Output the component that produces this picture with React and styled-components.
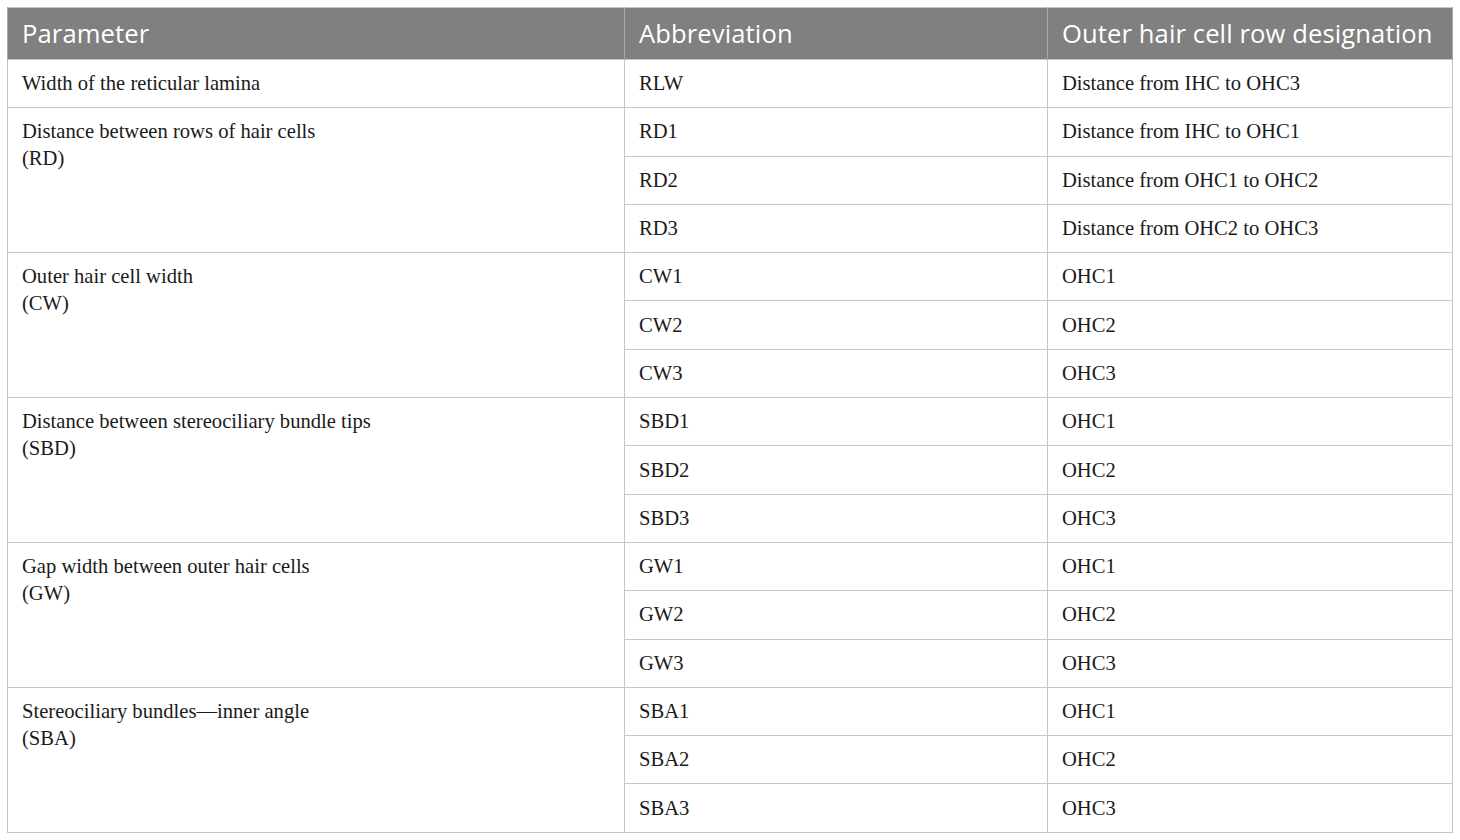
import React from "react";
import styled, { createGlobalStyle } from "styled-components";

const Global = createGlobalStyle`
  html, body { margin: 0; padding: 0; background: #ffffff; }
  body { font-family: "Liberation Serif", serif; }
`;

const Page = styled.div`
  padding: 7px 7px 0 7px;
  width: 1445px;
`;

const Table = styled.table`
  border-collapse: collapse;
  width: 1445px;
  table-layout: fixed;
  border: 1px solid #c6c6c6;
`;

const HeadCell = styled.th`
  background: #808080;
  color: #ffffff;
  font-family: "Open Sans", sans-serif;
  font-weight: 400;
  font-size: 25.6px;
  letter-spacing: 0.1px;
  text-align: left;
  height: 51px;
  padding: 0 14px;
  border-left: 1px solid #a8a8a8;
  border-right: 1px solid #a8a8a8;
  vertical-align: middle;
  white-space: nowrap;
`;

const Cell = styled.td`
  font-family: "Liberation Serif", serif;
  font-size: 20.6px;
  line-height: 27px;
  color: #1a1a1a;
  height: 47.3px;
  padding: ${(p) => (p.$top ? "10px 14px 0 14px" : "0 14px")};
  vertical-align: ${(p) => (p.$top ? "top" : "middle")};
  border: 1px solid #c6c6c6;
  white-space: nowrap;
`;

const groups = [
  { label: ["Width of the reticular lamina"], rows: [["RLW", "Distance from IHC to OHC3"]] },
  {
    label: ["Distance between rows of hair cells", "(RD)"],
    rows: [
      ["RD1", "Distance from IHC to OHC1"],
      ["RD2", "Distance from OHC1 to OHC2"],
      ["RD3", "Distance from OHC2 to OHC3"],
    ],
  },
  { label: ["Outer hair cell width", "(CW)"], rows: [["CW1", "OHC1"], ["CW2", "OHC2"], ["CW3", "OHC3"]] },
  {
    label: ["Distance between stereociliary bundle tips", "(SBD)"],
    rows: [["SBD1", "OHC1"], ["SBD2", "OHC2"], ["SBD3", "OHC3"]],
  },
  { label: ["Gap width between outer hair cells", "(GW)"], rows: [["GW1", "OHC1"], ["GW2", "OHC2"], ["GW3", "OHC3"]] },
  {
    label: ["Stereociliary bundles\u2014inner angle", "(SBA)"],
    rows: [["SBA1", "OHC1"], ["SBA2", "OHC2"], ["SBA3", "OHC3"]],
  },
];

export default function App() {
  return (
    <Page>
      <Global />
      <Table>
        <colgroup>
          <col style={{ width: 617 }} />
          <col style={{ width: 423 }} />
          <col style={{ width: 405 }} />
        </colgroup>
        <thead>
          <tr>
            <HeadCell>Parameter</HeadCell>
            <HeadCell>Abbreviation</HeadCell>
            <HeadCell>Outer hair cell row designation</HeadCell>
          </tr>
        </thead>
        <tbody>
          {groups.map((g, gi) =>
            g.rows.map((r, ri) => (
              <tr key={`${gi}-${ri}`}>
                {ri === 0 && (
                  <Cell rowSpan={g.rows.length} $top={g.rows.length > 1}>
                    {g.label.map((l, li) => (
                      <div key={li}>{l}</div>
                    ))}
                  </Cell>
                )}
                <Cell>{r[0]}</Cell>
                <Cell>{r[1]}</Cell>
              </tr>
            ))
          )}
        </tbody>
      </Table>
    </Page>
  );
}
